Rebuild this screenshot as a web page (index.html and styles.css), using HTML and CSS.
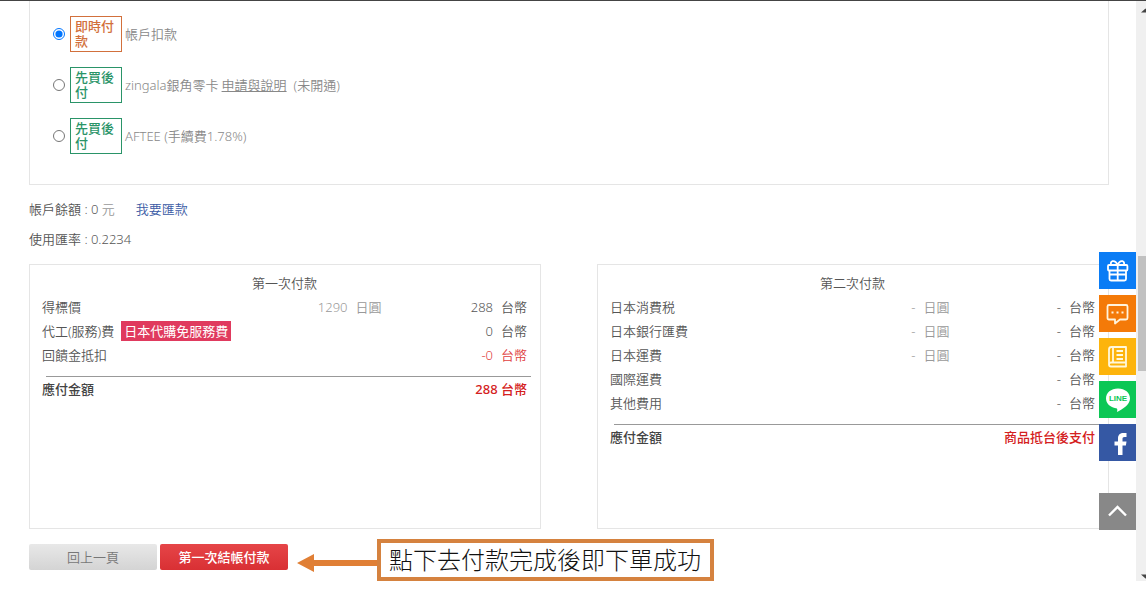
FILE: index.html
```html
<!DOCTYPE html>
<html lang="zh-Hant">
<head>
    <meta charset="UTF-8">
    <meta name="viewport" content="width=device-width, initial-scale=1.0">
    <title>結帳付款</title>
    <link rel="stylesheet" href="styles.css">
</head>
<body>
    <div class="window">
        <main class="content">
            <form class="methods">
                <div class="method">
                    <input type="radio" name="pay" id="pay-account" checked>
                    <label for="pay-account"><span class="tag tag-now">即時付款</span>帳戶扣款</label>
                </div>
                <div class="method">
                    <input type="radio" name="pay" id="pay-zingala">
                    <label for="pay-zingala"><span class="tag tag-later">先買後付</span>zingala銀角零卡</label>
                    <a href="#" class="method-link">申請與說明</a>
                    <span class="method-note">(未開通)</span>
                </div>
                <div class="method">
                    <input type="radio" name="pay" id="pay-aftee">
                    <label for="pay-aftee"><span class="tag tag-later">先買後付</span>AFTEE (手續費1.78%)</label>
                </div>
            </form>

            <div class="account">
                <p>帳戶餘額 : 0 <span class="muted">元</span><a href="#" class="remit">我要匯款</a></p>
                <p>使用匯率 : 0.2234</p>
            </div>

            <div class="payments">
                <section class="payment">
                    <h2>第一次付款</h2>
                    <table>
                        <tr>
                            <td>得標價</td>
                            <td class="yen">1290<span class="unit">日圓</span></td>
                            <td class="twd">288<span class="unit">台幣</span></td>
                        </tr>
                        <tr>
                            <td>代工(服務)費<span class="promo">日本代購免服務費</span></td>
                            <td class="yen"></td>
                            <td class="twd">0<span class="unit">台幣</span></td>
                        </tr>
                        <tr>
                            <td>回饋金抵扣</td>
                            <td class="yen"></td>
                            <td class="twd discount">-0<span class="unit">台幣</span></td>
                        </tr>
                    </table>
                    <hr>
                    <div class="total">
                        <span>應付金額</span>
                        <span class="amount">288 台幣</span>
                    </div>
                </section>

                <section class="payment">
                    <h2>第二次付款</h2>
                    <table>
                        <tr>
                            <td>日本消費税</td>
                            <td class="yen">-<span class="unit">日圓</span></td>
                            <td class="twd">-<span class="unit">台幣</span></td>
                        </tr>
                        <tr>
                            <td>日本銀行匯費</td>
                            <td class="yen">-<span class="unit">日圓</span></td>
                            <td class="twd">-<span class="unit">台幣</span></td>
                        </tr>
                        <tr>
                            <td>日本運費</td>
                            <td class="yen">-<span class="unit">日圓</span></td>
                            <td class="twd">-<span class="unit">台幣</span></td>
                        </tr>
                        <tr>
                            <td>國際運費</td>
                            <td class="yen"></td>
                            <td class="twd">-<span class="unit">台幣</span></td>
                        </tr>
                        <tr>
                            <td>其他費用</td>
                            <td class="yen"></td>
                            <td class="twd">-<span class="unit">台幣</span></td>
                        </tr>
                    </table>
                    <hr>
                    <div class="total">
                        <span>應付金額</span>
                        <span class="amount">商品抵台後支付</span>
                    </div>
                </section>
            </div>

            <div class="actions">
                <div class="buttons">
                    <button type="button" class="btn btn-back">回上一頁</button>
                    <button type="button" class="btn btn-pay">第一次結帳付款</button>
                </div>
                <svg class="arrow" width="80" height="18" viewBox="0 0 80 18" aria-hidden="true">
                    <path d="M0 9L17 0V6H80V12H17V18Z" fill="#e07f35"/>
                </svg>
                <div class="callout">點下去付款完成後即下單成功</div>
            </div>
        </main>

        <div class="scrollbar">
            <svg width="5" height="5" viewBox="0 0 5 5" aria-hidden="true"><path d="M0 4.500L4.500 0.500L5 1V4.500Z" fill="#444"/></svg>
            <div class="thumb"></div>
            <svg width="5" height="5" viewBox="0 0 5 5" aria-hidden="true"><path d="M0 0.500H5V4.500H4.500Z" fill="#444"/></svg>
        </div>

        <nav class="side">
            <a href="#" class="side-gift" aria-label="gift">
                <svg width="37" height="37" viewBox="0 0 37 37" fill="none" stroke="#fff" stroke-width="1.800" stroke-linejoin="round">
                    <rect x="9" y="13" width="19.400" height="5.500" rx="1"/>
                    <path d="M10.500 18.500V27Q10.500 28.500 12 28.500H25.500Q27 28.500 27 27V18.500M18.700 13V28.500M10.500 22.500H27"/>
                    <path d="M18.700 13C17 9.500 15 8.800 13.500 9.200C11.500 9.800 11.500 12 12.500 13M18.700 13C20 9.500 22 8.800 23.500 9.200C25.500 9.800 25.500 12 24.500 13"/>
                </svg>
            </a>
            <a href="#" class="side-chat" aria-label="chat">
                <svg width="37" height="37" viewBox="0 0 37 37" fill="none" stroke="#fff3dc" stroke-width="1.800" stroke-linejoin="round">
                    <path d="M10 10H27Q28.500 10 28.500 11.500V23Q28.500 24.500 27 24.500H21L16 28.500V24.500H10Q8.500 24.500 8.500 23V11.500Q8.500 10 10 10Z"/>
                    <path d="M12.500 17.500H14.500M17.500 17.500H19.500M22.500 17.500H24.500" stroke-width="2"/>
                </svg>
            </a>
            <a href="#" class="side-book" aria-label="guide">
                <svg width="37" height="37" viewBox="0 0 37 37" fill="none" stroke="#fff8dc" stroke-width="1.800" stroke-linejoin="round">
                    <path d="M12.500 9H27V24.500H12Q10 24.500 10 26.500Q10 28.500 12 28.500H27V24.500M10 26.500V11.500Q10 9 12.500 9M14 9V24.500"/>
                    <path d="M17.500 13H24M17.500 17H24M17.500 21H24"/>
                </svg>
            </a>
            <a href="#" class="side-line">
                <svg width="37" height="37" viewBox="0 0 37 37" aria-hidden="true">
                    <path d="M19 7.500C12 7.500 7 11.800 7 17.500C7 22.500 11.200 26.300 17 27.200C18.500 27.500 18.500 28.300 18 31C23 28.500 31 24 31 17.500C31 11.800 26 7.500 19 7.500Z" fill="#fff"/>
                    <text x="19" y="20" text-anchor="middle" class="line-text">LINE</text>
                </svg>
            </a>
            <a href="#" class="side-fb" aria-label="facebook">
                <svg width="37" height="37" viewBox="0 0 37 37">
                    <path d="M19 31V21.500H15.500V17.500H19V14.500C19 10.800 21.200 9 24.500 9H27.500V13H25.500C23.900 13 23.500 13.700 23.500 15V17.500H27.500L26.900 21.500H23.500V31Z" fill="#fff"/>
                </svg>
            </a>
            <a href="#" class="side-top" aria-label="top">
                <svg width="37" height="37" viewBox="0 0 37 37" fill="none" stroke="#fff" stroke-width="2.400">
                    <path d="M10 22.500L18.500 14L27 22.500"/>
                </svg>
            </a>
        </nav>
    </div>
</body>
</html>
```
FILE: styles.css
```css
* {
    box-sizing: border-box;
}
body {
    margin: 0;
    background: #fff;
    color: #555;
    font-family: "Noto Sans", "Noto Sans CJK TC", sans-serif;
    font-size: 13px;
    font-weight: 350;
    line-height: 24px;
}
a {
    color: inherit;
    text-decoration: none;
}
p {
    margin: 0;
}
.window {
    position: relative;
    display: flex;
    border-top: 1px solid #444;
}
.content {
    flex: 1;
    padding: 0 27px 0 29px;
}

/* payment methods */
.methods {
    display: flex;
    flex-direction: column;
    gap: 15px;
    padding: 15px 23px 30px;
    border: 1px solid #e5e5e5;
    border-top: 0;
    color: #888;
}
.method {
    display: flex;
    align-items: center;
}
.method input {
    width: 12px;
    height: 12px;
    margin: 0 5px 0 0;
}
.method label {
    display: flex;
    align-items: center;
}
.tag {
    width: 52px;
    margin-right: 3px;
    padding: 2px 4px;
    border: 1px solid;
    font-weight: 500;
    line-height: 15px;
    height: 36px;
}
.tag-now {
    color: #d2703c;
}
.tag-later {
    color: #2a9468;
}
.method-link {
    margin-left: 3px;
    text-decoration: underline;
}
.method-note {
    margin-left: 7px;
}

.account {
    padding: 9px 0 10px;
    line-height: 30px;
}
.muted {
    color: #999;
}
.remit {
    margin-left: 21px;
    color: #3b5ba5;
}

/* first and second payment */
.payments {
    display: grid;
    grid-template-columns: 1fr 1fr;
    gap: 56px;
}
.payment {
    min-height: 265px;
    padding: 6px 13px 6px 12px;
    border: 1px solid #e5e5e5;
}
.payment h2 {
    margin: 0;
    font-size: 13px;
    font-weight: 350;
    text-align: center;
}
.payment table {
    width: 100%;
    border-collapse: collapse;
}
.payment td {
    height: 24px;
    padding: 0;
    white-space: nowrap;
}
.payment .yen {
    color: #999;
    text-align: right;
}
.payment .twd {
    width: 30%;
    text-align: right;
}
.payment .discount {
    color: #e04040;
}
.unit {
    margin-left: 8px;
}
.promo {
    display: inline-block;
    margin-left: 7px;
    padding: 0 3px;
    background: #e03a5e;
    color: #fff;
    font-weight: 400;
    line-height: 20px;
}
.payment hr {
    height: 1px;
    margin: 9px -4px 0 4px;
    border: 0;
    background: #999;
}
.total {
    display: flex;
    justify-content: space-between;
    color: #444;
    font-weight: 500;
}
.total .amount {
    color: #d42020;
}

/* buttons and callout */
.actions {
    display: flex;
    align-items: flex-start;
    padding-top: 10px;
}
.buttons {
    display: flex;
    gap: 3px;
    padding-top: 5px;
}
.btn {
    width: 128px;
    height: 26px;
    padding: 0;
    border: 0;
    border-radius: 2px;
    font: inherit;
}
.btn-back {
    background: linear-gradient(#e8e8e8, #d4d4d4);
    color: #777;
}
.btn-pay {
    background: linear-gradient(#e64548, #d93034);
    color: #fff;
    font-weight: 500;
}
.arrow {
    margin: 15px 0 0 9px;
}
.callout {
    padding: 0 9px 0 8px;
    border: 4px solid #d5823f;
    color: #111;
    font-size: 24px;
    font-weight: 300;
    line-height: 34px;
    white-space: nowrap;
}

.scrollbar {
    display: flex;
    flex-direction: column;
    justify-content: space-between;
    align-items: flex-end;
    width: 10px;
    padding: 7px 0 2px;
    background: #f0f0f0;
}
.thumb {
    width: 8px;
    height: 20%;
    margin-top: 40px;
    background: #c1c1c1;
}

/* floating shortcuts */
.side {
    position: absolute;
    top: 251px;
    right: 10px;
    display: flex;
    flex-direction: column;
    gap: 6px;
}
.side a {
    width: 37px;
    height: 37px;
}
.side svg {
    display: block;
}
.side-gift {
    background: #0a7cf5;
}
.side-chat {
    background: #f47a08;
}
.side-book {
    background: #fdb40c;
}
.side-line {
    background: #0cc755;
}
.side-fb {
    background: #3558a4;
}
.side-top {
    margin-top: 26px;
    background: #888;
}
.line-text {
    fill: #0cc755;
    font-family: "Liberation Sans", sans-serif;
    font-size: 8px;
    font-weight: 700;
}
```
